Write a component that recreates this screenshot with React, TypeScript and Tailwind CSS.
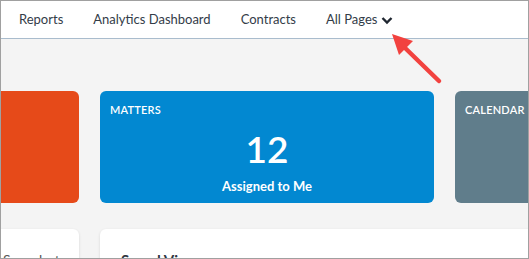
import React from "react";

const navItems = ["Reports", "Analytics Dashboard", "Contracts"];

const App = () => {
  return (
    <div
      className="relative w-[529px] h-[259px] overflow-hidden border border-[#a0a0a0] bg-[#f4f4f4]"
      style={{ fontFamily: "Lato, 'Open Sans', sans-serif" }}
    >
      <nav className="h-[38px] bg-white border-b border-[#a9bccd] flex items-center pl-[18px] gap-[30px] text-[13px] text-[#333c48]">
        {navItems.map((item) => (
          <span key={item}>{item}</span>
        ))}
        <span className="flex items-center gap-[4px]">
          All Pages
          <svg width="12" height="9" viewBox="0 0 12 9" className="mt-[1px]">
            <path d="M1.5 2 L6 6.5 L10.5 2" fill="none" stroke="#1f2630" strokeWidth="2.4" />
          </svg>
        </span>
      </nav>

      <div className="pt-[52px]">
        <div className="flex gap-[21px] ml-[-256px]">
          <div className="shrink-0 w-[334px] h-[112px] rounded-[6px] bg-[#e64a19]" />
          <div className="shrink-0 w-[334px] h-[112px] rounded-[6px] bg-[#0288d1] text-white flex flex-col px-[10px] pt-[13px]">
            <span className="text-[11px] font-semibold tracking-[0.2px] leading-none">MATTERS</span>
            <span className="text-center text-[37px] font-semibold leading-none mt-[15px]">12</span>
            <span className="text-center text-[13px] font-bold mt-[10px]">Assigned to Me</span>
          </div>
          <div className="shrink-0 w-[334px] h-[112px] rounded-[6px] bg-[#607d8b] text-white px-[10px] pt-[13px]">
            <div className="text-[11px] font-semibold tracking-[0.2px] leading-none">CALENDAR</div>
          </div>
        </div>

        <div className="flex gap-[21px] ml-[-256px] mt-[26px]">
          <div className="shrink-0 w-[334px] h-[120px] rounded-[6px] bg-white shadow-[0_1px_3px_rgba(0,0,0,0.12)] pl-[258px] pt-[20px] text-[14px] text-[#555]">
            Snapshot
          </div>
          <div className="shrink-0 w-[500px] h-[120px] rounded-[6px] bg-white shadow-[0_1px_3px_rgba(0,0,0,0.12)] pl-[21px] pt-[20px] text-[15px] font-bold text-[#2d3440]">
            Saved Views
          </div>
        </div>
      </div>

      <svg className="absolute left-[385px] top-[28px]" width="60" height="60" viewBox="0 0 60 60">
        <line x1="16" y1="16" x2="53" y2="52" stroke="#f2423f" strokeWidth="4.5" strokeLinecap="round" />
        <polygon points="6,5 27,12 13,26" fill="#f2423f" />
      </svg>
    </div>
  );
};

export default App;
